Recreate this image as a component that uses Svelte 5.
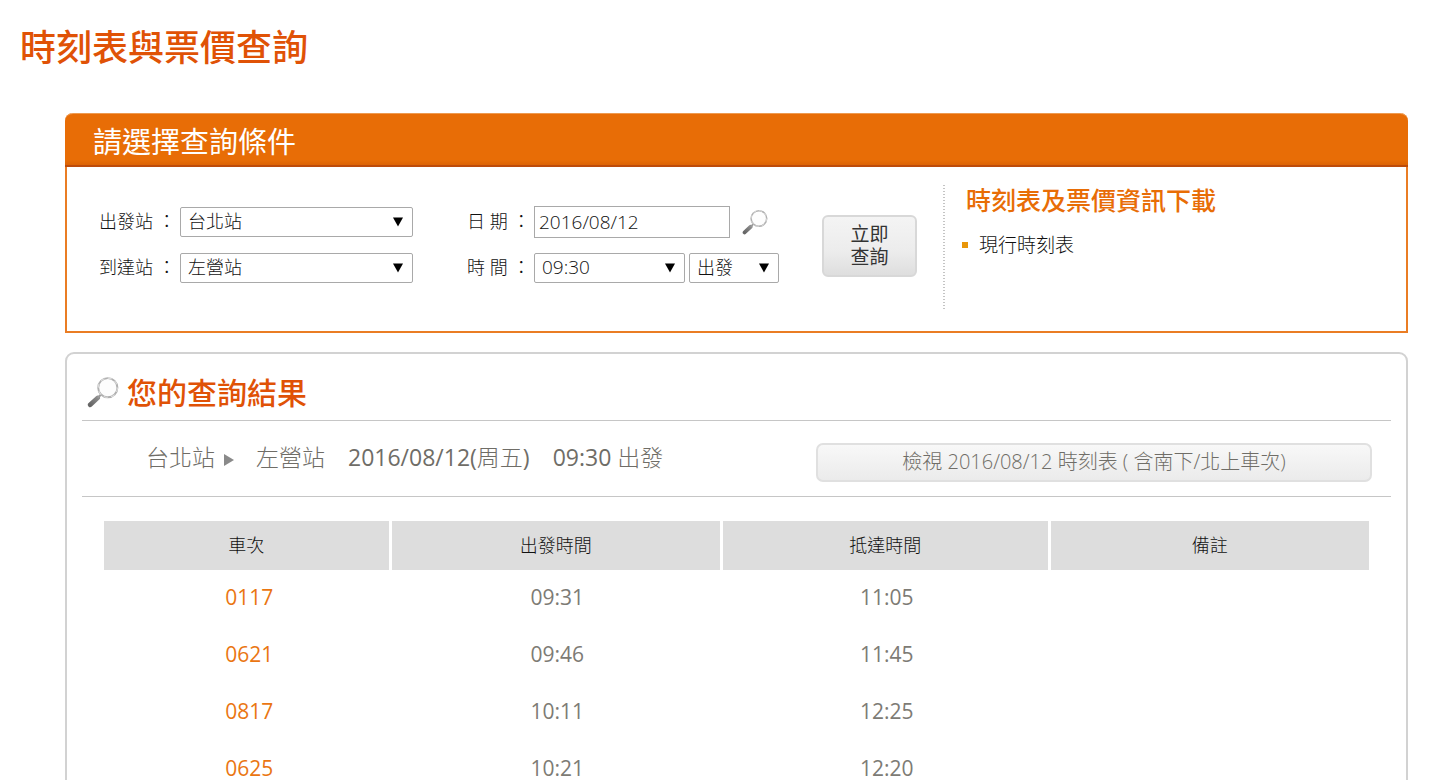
<script>
  const stations = ['台北站', '左營站'];
  let from = $state('台北站');
  let to = $state('左營站');
  let date = $state('2016/08/12');
  let time = $state('09:30');
  let mode = $state('出發');

  const columns = ['車次', '出發時間', '抵達時間', '備註'];
  const trains = [
    { no: '0117', depart: '09:31', arrive: '11:05' },
    { no: '0621', depart: '09:46', arrive: '11:45' },
    { no: '0817', depart: '10:11', arrive: '12:25' },
    { no: '0625', depart: '10:21', arrive: '12:20' }
  ];
</script>

{#snippet magnifier(size, id)}
  <svg width={size} height={size} viewBox="0 0 30 30" aria-hidden="true">
    <defs>
      <linearGradient {id} x1="0" y1="1" x2="1" y2="0">
        <stop offset="0" stop-color="#666" />
        <stop offset="1" stop-color="#8c8c8c" />
      </linearGradient>
    </defs>
    <path d="M3 27L10 20.5" stroke="url(#{id})" stroke-width="4.4" stroke-linecap="round" />
    <path d="M10 20.5L13 17.5" stroke="#999" stroke-width="2" />
    <circle cx="19.5" cy="11" r="9" fill="#fdfdfd" stroke="#b0b0b0" stroke-width="1.8" />
    <circle cx="19.5" cy="11" r="9" fill="none" stroke="#ddd" stroke-width="1" stroke-dasharray="4 3" />
  </svg>
{/snippet}

{#snippet arrow()}
  <svg class="arrow" width="10" height="10" viewBox="0 0 10 10" aria-hidden="true">
    <path d="M0 0.5H10L5 9.5Z" fill="#000" />
  </svg>
{/snippet}

<main lang="zh-Hant">
  <h1>時刻表與票價查詢</h1>

  <section class="search">
    <h2>請選擇查詢條件</h2>
    <div class="search-body">
      <form onsubmit={(e) => e.preventDefault()}>
        <div class="fields stations">
          <label for="from">出發站 ：</label>
          <span class="select">
            <select id="from" bind:value={from}>
              {#each stations as s}<option>{s}</option>{/each}
            </select>
            {@render arrow()}
          </span>
          <label for="to">到達站 ：</label>
          <span class="select">
            <select id="to" bind:value={to}>
              {#each stations as s}<option>{s}</option>{/each}
            </select>
            {@render arrow()}
          </span>
        </div>

        <div class="fields when">
          <label for="date">日 期 ：</label>
          <div class="line date">
            <input id="date" type="text" bind:value={date} />
            <button type="button" class="pick" aria-label="日期">{@render magnifier(26, 'lens-s')}</button>
          </div>
          <label for="time">時 間 ：</label>
          <div class="line">
            <span class="select time">
              <select id="time" bind:value={time}><option>09:30</option></select>
              {@render arrow()}
            </span>
            <span class="select mode">
              <select aria-label="出發" bind:value={mode}><option>出發</option></select>
              {@render arrow()}
            </span>
          </div>
        </div>

        <button type="submit" class="submit">立即<br />查詢</button>
      </form>

      <aside>
        <h3>時刻表及票價資訊下載</h3>
        <ul>
          <li><a href="#timetable">現行時刻表</a></li>
        </ul>
      </aside>
    </div>
  </section>

  <section class="results">
    <h2>{@render magnifier(32, 'lens-l')}您的查詢結果</h2>
    <div class="summary">
      <p>
        <span>{from}</span>
        <svg width="10" height="12" viewBox="0 0 10 12" aria-hidden="true"><path d="M0 0L10 6L0 12Z" fill="#8a8a8a" /></svg>
        <span class="dest">{to}</span>
        <span class="stamp"><b>{date}(</b>周五<b>)</b></span>
        <span class="stamp"><b>{time}</b> {mode}</span>
      </p>
      <button type="button">檢視 {date} 時刻表 ( 含南下/北上車次)</button>
    </div>
    <table>
      <colgroup><col class="c1" /><col class="c2" /><col class="c3" /><col class="c4" /></colgroup>
      <thead>
        <tr>{#each columns as c}<th scope="col">{c}</th>{/each}</tr>
      </thead>
      <tbody>
        {#each trains as t}
          <tr>
            <td><a href="#train-{t.no}">{t.no}</a></td>
            <td>{t.depart}</td>
            <td>{t.arrive}</td>
            <td></td>
          </tr>
        {/each}
      </tbody>
    </table>
  </section>
</main>

<style>
  :global(body) { background: #fff; }
  main {
    padding: 20px 40px 40px 65px;
    font-family: 'Open Sans', 'Noto Sans CJK TC', sans-serif;
    font-weight: 300;
    font-size: 18px;
    color: #111;
  }
  main * { box-sizing: border-box; }
  h1, h2, h3, p, ul { margin: 0; padding: 0; }
  h1, h2, h3 { font-family: 'Noto Sans CJK TC', sans-serif; }
  button, select, input { font: inherit; color: inherit; }
  a { color: inherit; text-decoration: none; }

  h1 {
    margin-left: -45px;
    margin-bottom: 43px;
    font-size: 36px;
    line-height: 50px;
    font-weight: 500;
    color: #e05206;
  }

  .search {
    border: 2px solid #ea7d24;
    border-top: 0;
    border-radius: 8px 8px 0 0;
    margin-bottom: 19px;
  }
  .search > h2 {
    height: 54px;
    margin: 0 -2px;
    padding-left: 28px;
    border-radius: 8px 8px 0 0;
    border-top: 1px solid #ee9a50;
    border-bottom: 2px solid #bd4b0a;
    background: linear-gradient(#e86d06 90%, #dc6304);
    color: #fff;
    font-size: 29px;
    line-height: 52px;
    font-weight: 400;
  }
  .search-body { display: flex; padding: 18px 20px 20px 32px; }
  form { display: flex; flex: none; align-items: flex-start; padding-top: 21px; }
  .fields { display: grid; row-gap: 15px; align-items: center; grid-template-rows: 32px 30px; line-height: 28px; }
  .fields label { white-space: nowrap; padding-bottom: 2px; }
  .stations { grid-template-columns: 81px 233px; }
  .when { grid-template-columns: 67px auto; margin-left: 54px; }
  .line { display: flex; align-items: center; gap: 4px; }
  .select { position: relative; display: block; }
  .time { width: 151px; }
  .mode { width: 90px; }
  select {
    display: block;
    width: 100%;
    height: 30px;
    padding: 0 28px 2px 7px;
    border: 1px solid #a9a9a9;
    border-radius: 2px;
    background: #fff;
    appearance: none;
    line-height: 26px;
  }
  .arrow { position: absolute; right: 10px; top: 10px; pointer-events: none; }
  .date { gap: 12px; }
  input {
    width: 196px;
    height: 32px;
    padding: 0 4px;
    border: 1px solid #a9a9a9;
    background: #fff;
    font-size: 19px;
  }
  select#time { font-size: 19px; }
  .pick { display: flex; padding: 0; border: 0; background: none; }
  .submit {
    width: 95px;
    height: 62px;
    margin: 9px 26px 0 43px;
    padding: 0;
    border: 2px solid #d8d8d8;
    border-radius: 6px;
    background: linear-gradient(#f4f4f4, #ececec 60%, #dedede);
    font-size: 19px;
    line-height: 23px;
    font-weight: 400;
    color: #333;
  }
  aside {
    flex: 1;
    min-height: 126px;
    padding-left: 19px;
    background: repeating-linear-gradient(#c4c4c4 0 1px, #fff 1px 3px) left / 2px 100% no-repeat;
  }
  h3 { margin-left: 4px; font-size: 25px; line-height: 28px; font-weight: 500; color: #e86d06; }
  ul { list-style: none; padding-top: 18px; }
  li { display: flex; align-items: center; gap: 11px; font-size: 19px; line-height: 28px; }
  li::before { content: ''; width: 6px; height: 6px; background: #e8960a; }

  .results { border: 2px solid #d2d2d2; border-radius: 9px; padding: 0 15px 24px; }
  .results > h2 {
    display: flex;
    align-items: center;
    gap: 8px;
    height: 67px;
    padding: 9px 0 2px 5px;
    border-bottom: 1px solid #c6c6c6;
    font-size: 30px;
    line-height: 52px;
    font-weight: 500;
    color: #e05206;
  }
  .results > h2 svg { margin-top: 3px; }
  .summary {
    display: flex;
    justify-content: space-between;
    align-items: flex-start;
    height: 76px;
    padding: 22px 19px 0 64px;
    border-bottom: 1px solid #c6c6c6;
    color: #6f6d67;
  }
  .summary p { display: flex; align-items: center; font-size: 23px; line-height: 28px; white-space: nowrap; }
  .summary p svg { margin: 5px 22px 0 9px; }
  .stamp { margin-left: 23px; }
  .stamp b { font-weight: 400; }
  .summary button {
    width: 556px;
    height: 39px;
    padding: 0 0 2px;
    border: 2px solid #e0e0e0;
    border-radius: 7px;
    background: linear-gradient(#f8f8f8, #ebebeb);
    font-size: 20px;
    line-height: 32px;
    white-space: nowrap;
  }
  table {
    width: calc(100% - 44px);
    margin: 24px 22px 0;
    border-collapse: separate;
    border-spacing: 0;
    table-layout: fixed;
    text-align: center;
  }
  .c1 { width: 22.5%; }
  .c2 { width: 26.2%; }
  .c3 { width: 25.9%; }
  .c4 { width: 25.4%; }
  th { height: 49px; padding: 0 0 2px; background: #ddd; font-weight: 300; font-size: 18px; line-height: 28px; }
  th + th { border-left: 3px solid #fff; }
  td { height: 57px; padding: 0 0 4px 6px; font-size: 21px; line-height: 28px; font-weight: 400; color: #7d7b75; }
  td a { color: #ea7612; }
</style>
